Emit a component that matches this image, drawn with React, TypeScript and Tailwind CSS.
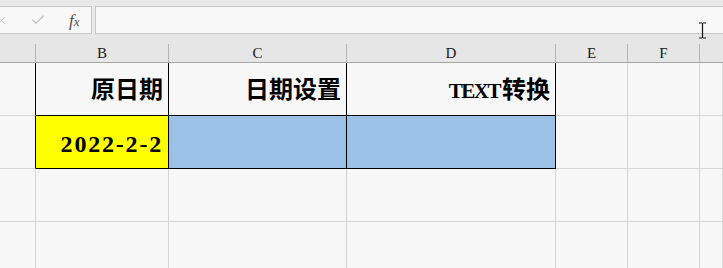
import { X, Check } from "lucide-react";

const cols = [36, 133, 178, 209, 72, 72, 23];
const letters = ["", "B", "C", "D", "E", "F", ""];

function HeaderCell({ w, label, last }: { w: number; label: string; last?: boolean }) {
  return (
    <div className="flex h-full shrink-0" style={{ width: w }}>
      <div className="flex flex-1 items-center justify-center pt-[11px] text-[15px] leading-none text-[#1a1a1a] [font-family:'Liberation_Serif',serif]">
        {label}
      </div>
      {!last && <div className="w-px h-[18px] self-end bg-[#b4b4b4]" />}
    </div>
  );
}

function Cell({
  w,
  bg = "",
  right = "border-r-[#d5d5d5]",
  bottom = "border-b-[#d5d5d5]",
  children,
}: {
  w: number;
  bg?: string;
  right?: string;
  bottom?: string;
  children?: React.ReactNode;
}) {
  return (
    <div
      className={`flex shrink-0 h-full items-center justify-end pr-[5px] border-r border-b ${right} ${bottom} ${bg}`}
      style={{ width: w }}
    >
      {children}
    </div>
  );
}

export default function App() {
  const cellFont = "[font-family:'Liberation_Serif','Noto_Sans_CJK_SC',serif] font-bold text-black";
  return (
    <div className="relative w-[723px] h-[268px] overflow-hidden bg-[#f7f7f7]">
      {/* formula bar */}
      <div className="flex h-[34px] pt-[6px] bg-[#e9e9e9]">
        <div className="-ml-[1px] w-[93px] h-[28px] shrink-0 border border-[#c8c8c8] bg-[#f8f8f8] flex items-center">
          <X size={13} strokeWidth={1.6} className="ml-[-5px] text-[#c4c4c4]" />
          <Check size={16} strokeWidth={2} className="ml-[22px] text-[#c4c4c4]" />
          <span className="ml-[23px] italic text-[17px] leading-none text-[#505050] [font-family:'Liberation_Serif',serif]">
            f<span className="text-[13px]">x</span>
          </span>
        </div>
        <div className="ml-[3px] flex-1 h-[28px] -mr-[4px] border border-[#c8c8c8] bg-[#f8f8f8]" />
      </div>

      {/* column headers */}
      <div className="flex h-[29px] bg-[#e6e6e6] border-b border-[#a6a6a6]">
        {cols.map((w, i) => (
          <HeaderCell key={i} w={w} label={letters[i]} last={i === cols.length - 1} />
        ))}
      </div>

      {/* row 1 */}
      <div className={`flex h-[53px] ${cellFont}`}>
        <Cell w={36} right="border-r-black" />
        <Cell w={133} right="border-r-black" bottom="border-b-black">
          <span className="text-[24px] leading-none pt-[1px]">原日期</span>
        </Cell>
        <Cell w={178} right="border-r-black" bottom="border-b-black">
          <span className="text-[24px] leading-none pt-[1px]">日期设置</span>
        </Cell>
        <Cell w={209} right="border-r-black" bottom="border-b-black">
          <span className="text-[24px] leading-none pt-[1px]">
            <span className="text-[21px] tracking-[-1.5px] mr-[2px]">TEXT</span>转换
          </span>
        </Cell>
        <Cell w={72} />
        <Cell w={72} />
        <Cell w={23} />
      </div>

      {/* row 2 */}
      <div className={`flex h-[53px] ${cellFont}`}>
        <Cell w={36} right="border-r-black" />
        <Cell w={133} bg="bg-[#ffff00]" right="border-r-black" bottom="border-b-black">
          <span className="text-[24px] leading-none pt-[4px] tracking-[1.8px]">2022-2-2</span>
        </Cell>
        <Cell w={178} bg="bg-[#9bc2e6]" right="border-r-black" bottom="border-b-black" />
        <Cell w={209} bg="bg-[#9bc2e6]" right="border-r-black" bottom="border-b-black" />
        <Cell w={72} />
        <Cell w={72} />
        <Cell w={23} />
      </div>

      {/* empty rows */}
      {[3, 4].map((r) => (
        <div key={r} className="flex h-[53px]">
          {cols.map((w, i) => (
            <Cell key={i} w={w} />
          ))}
        </div>
      ))}

      {/* text cursor */}
      <svg className="absolute left-[698px] top-[22px]" width="9" height="17" viewBox="0 0 9 17">
        <path d="M1 1h3M5 1h3M4.5 1v15M1 16h3M5 16h3" stroke="#111" strokeWidth="1.2" fill="none" />
      </svg>
    </div>
  );
}
